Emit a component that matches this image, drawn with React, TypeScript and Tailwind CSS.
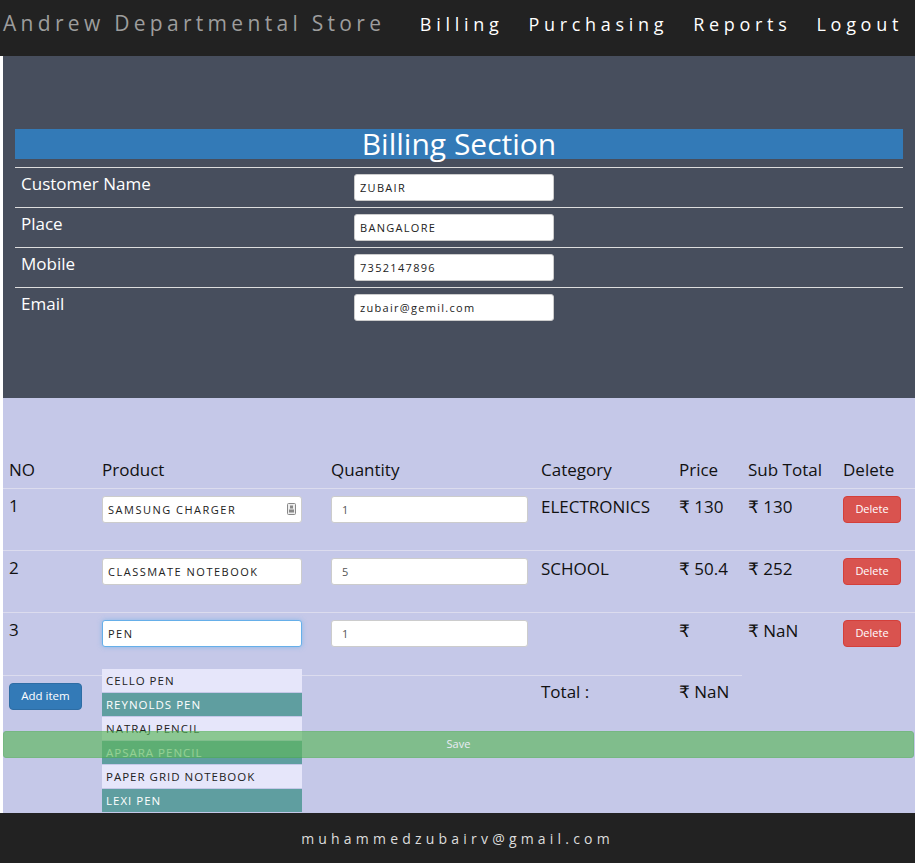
import React from "react";

const font = { fontFamily: '"Open Sans", "DejaVu Sans", sans-serif' };

const customer = [
  { label: "Customer Name", value: "ZUBAIR" },
  { label: "Place", value: "BANGALORE" },
  { label: "Mobile", value: "7352147896" },
  { label: "Email", value: "zubair@gemil.com" },
];

const items = [
  { no: 1, product: "SAMSUNG CHARGER", qty: "1", category: "ELECTRONICS", price: "₹ 130", sub: "₹ 130", icon: true },
  { no: 2, product: "CLASSMATE NOTEBOOK", qty: "5", category: "SCHOOL", price: "₹ 50.4", sub: "₹ 252" },
  { no: 3, product: "PEN", qty: "1", category: "", price: "₹", sub: "₹ NaN", focus: true },
];

const suggestions = [
  "CELLO PEN",
  "REYNOLDS PEN",
  "NATRAJ PENCIL",
  "APSARA PENCIL",
  "PAPER GRID NOTEBOOK",
  "LEXI PEN",
];

const cols = "grid grid-cols-[93px_229px_210px_138px_69px_95px_78px]";

function CardIcon() {
  return (
    <svg width="9" height="12" viewBox="0 0 9 12" className="absolute right-[6px] top-[7px]">
      <rect x="0.5" y="0.5" width="8" height="11" rx="1" fill="#eee" stroke="#888" />
      <rect x="3" y="2.5" width="3" height="3" fill="#888" />
      <rect x="2" y="6.5" width="5" height="3" fill="#888" />
    </svg>
  );
}

export default function App() {
  return (
    <div style={font} className="w-[915px] bg-white">
      {/* Navbar */}
      <nav className="flex h-[56px] items-center justify-between bg-[#222] pb-[8px]">
        <span className="pl-[3px] text-[21px] tracking-[4.3px] text-[#9d9d9d]">
          Andrew Departmental Store
        </span>
        <div className="flex items-center gap-[25px] pr-[12px] text-[18px] tracking-[4.7px] text-white">
          <span>Billing</span>
          <span>Purchasing</span>
          <span>Reports</span>
          <span>Logout</span>
        </div>
      </nav>

      <div className="pl-[3px]">
        {/* Customer section */}
        <section className="h-[342px] bg-[#474e5d] px-[12px] pt-[73px]">
          <div className="h-[30px] bg-[#337ab7] text-center text-[30px] leading-[30px] text-white">
            Billing Section
          </div>
          <div className="mt-[8px]">
            {customer.map((c) => (
              <div key={c.label} className="flex h-[40px] border-t border-[#ddd]">
                <div className="w-[339px] pl-[6px] pt-[4px] text-[17px] leading-[24px] text-white">
                  {c.label}
                </div>
                <div className="pt-[6px]">
                  <input
                    readOnly
                    value={c.value}
                    className="h-[27px] w-[200px] rounded-[3px] border border-[#ccc] bg-white px-[5px] text-[11px] tracking-[1.3px] text-[#222] outline-none"
                  />
                </div>
              </div>
            ))}
          </div>
        </section>

        {/* Items section */}
        <section className="relative h-[415px] bg-[#c5c8e8] pt-[53px] text-[17px] text-[#111]">
          <div className={`${cols} h-[38px] border-b border-[#dcdcee] leading-[24px]`}>
            {["NO", "Product", "Quantity", "Category", "Price", "Sub Total", "Delete"].map((h) => (
              <div key={h} className="pl-[6px] pt-[7px]">
                {h}
              </div>
            ))}
          </div>

          {items.map((it, i) => (
            <div
              key={it.no}
              className={`${cols} h-[62px] leading-[24px] ${i < items.length - 1 ? "border-b border-[#dcdcee]" : ""}`}
            >
              <div className="pl-[6px] pt-[5px]">{it.no}</div>
              <div className="relative pl-[6px] pt-[7px]">
                <div className="relative w-[200px]">
                  <input
                    readOnly
                    value={it.product}
                    className={`h-[27px] w-[200px] rounded-[3px] border bg-white px-[5px] text-[11px] tracking-[1.5px] text-[#222] outline-none ${
                      it.focus ? "border-[#66afe9] shadow-[0_0_5px_rgba(102,175,233,0.6)]" : "border-[#ccc]"
                    }`}
                  />
                  {it.icon && <CardIcon />}
                </div>
              </div>
              <div className="pl-[6px] pt-[7px]">
                <input
                  readOnly
                  value={it.qty}
                  className="h-[27px] w-[197px] rounded-[3px] border border-[#ccc] bg-white px-[10px] text-[11px] text-[#555] outline-none"
                />
              </div>
              <div className="pl-[6px] pt-[6px]">{it.category}</div>
              <div className="pl-[6px] pt-[6px]">{it.price}</div>
              <div className="pl-[6px] pt-[6px]">{it.sub}</div>
              <div className="pl-[6px] pt-[6px]">
                <button className="h-[27px] w-[58px] rounded-[4px] border border-[#d43f3a] bg-[#d9534f] text-[11px] text-white">
                  Delete
                </button>
              </div>
            </div>
          ))}

          {/* Totals row */}
          <div className="w-[739px] border-t border-[#dcdcee]" />
          <div className={`${cols} h-[48px] leading-[24px]`}>
            <div className="pl-[6px] pt-[6px]">
              <button className="h-[27px] w-[73px] rounded-[4px] border border-[#2e6da4] bg-[#337ab7] text-[11.5px] text-white">
                Add item
              </button>
            </div>
            <div />
            <div />
            <div className="pl-[6px] pt-[4px]">Total :</div>
            <div className="pl-[6px] pt-[4px]">₹ NaN</div>
          </div>

          {/* Autocomplete list */}
          <ul className="absolute left-[99px] top-[271px] w-[200px] text-[11.5px] leading-[23px] tracking-[1px]">
            {suggestions.map((s, i) => (
              <li
                key={s}
                className={`mb-px h-[23px] pl-[4px] ${i % 2 === 0 ? "bg-[#e6e6fa] text-[#222]" : "bg-[#5f9ea0] text-white"}`}
              >
                {s}
              </li>
            ))}
          </ul>

          <div className="pr-[1px] pt-[5px]">
            <button className="relative z-10 h-[27px] w-full rounded-[3px] border border-[#4cae4c] bg-[#5cb85c] text-[11px] text-white opacity-65">
              Save
            </button>
          </div>
        </section>
      </div>

      {/* Footer */}
      <footer className="relative flex h-[50px] items-center justify-center bg-[#222] text-[14px] tracking-[4.2px] text-[#ddd]">
        muhammedzubairv@gmail.com
      </footer>
    </div>
  );
}
